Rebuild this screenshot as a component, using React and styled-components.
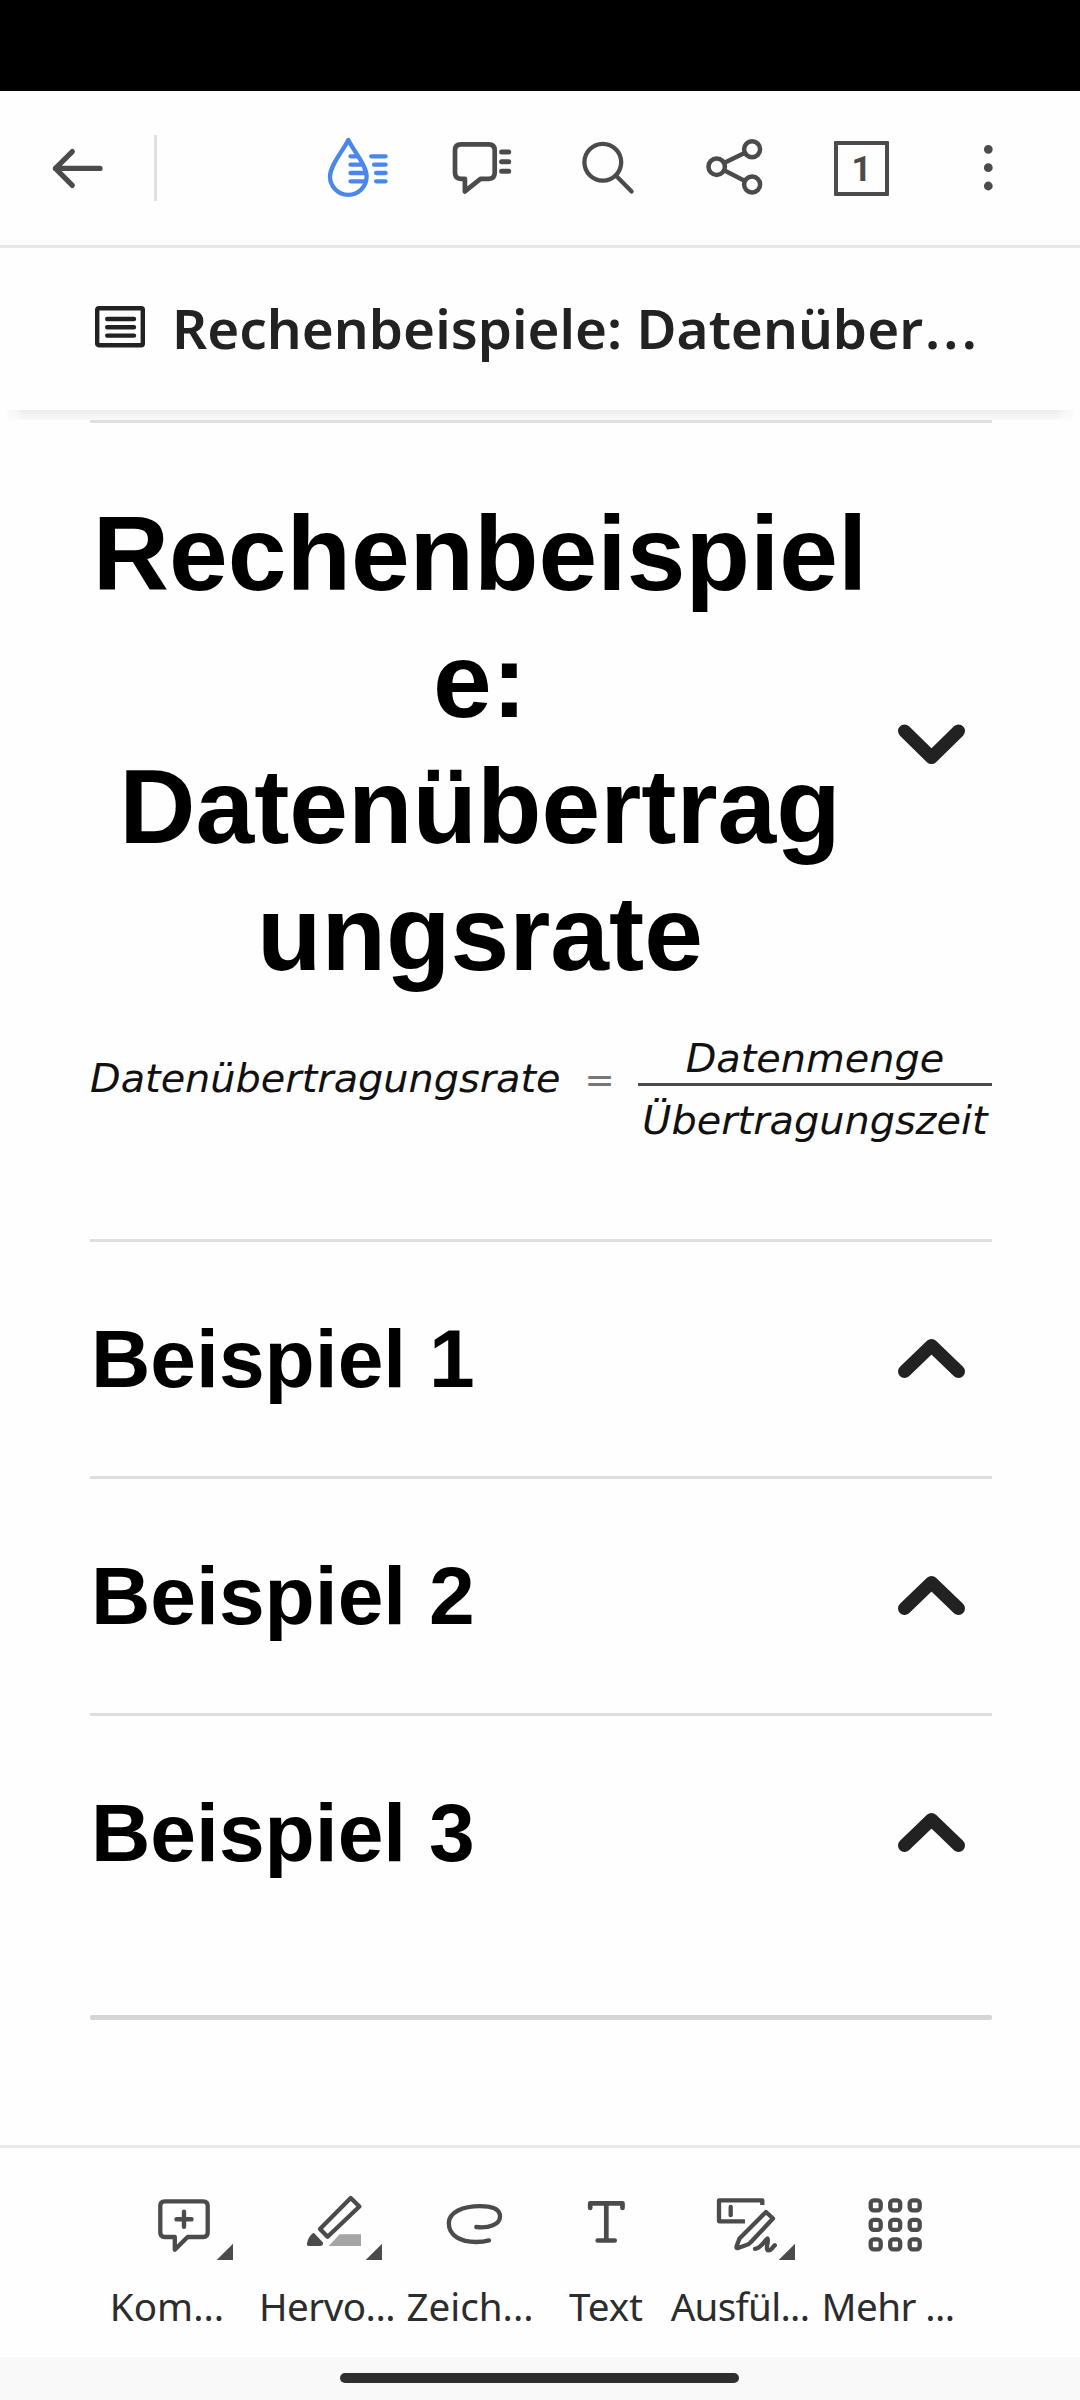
import React from "react";
import styled, { createGlobalStyle } from "styled-components";

const Ink = "#4b4b4b";
const Blue = "#4b87eb";

const GlobalStyle = createGlobalStyle`
  * { box-sizing: border-box; }
  body { margin: 0; background: #fefefe; }
`;

const Screen = styled.div`
  display: flex;
  flex-direction: column;
  width: 1080px;
  height: 2400px;
  overflow: hidden;
  background: #fefefe;
  font-family: "Noto Sans", sans-serif;
`;

const StatusBar = styled.div`
  height: 91px;
  flex: none;
  background: #000;
`;

const TopBar = styled.header`
  display: flex;
  align-items: center;
  flex: none;
  height: 157px;
  padding: 0 29px 0 37px;
  border-bottom: 3px solid #e7e7e7;
`;

const Divider = styled.div`
  width: 3px;
  height: 66px;
  margin-left: 37px;
  background: #e0e0e0;
`;

const Actions = styled.div`
  display: flex;
  gap: 46.5px;
  margin-left: auto;
  margin-right: 23px;
`;

const Action = styled.div`
  display: flex;
  align-items: center;
  justify-content: center;
  width: 80px;
  height: 80px;
`;

const Icon = styled.svg`
  display: block;
  flex: none;
  fill: none;
  stroke: ${(p) => p.$color || Ink};
  stroke-width: ${(p) => p.$weight || 4.3};
  stroke-linecap: round;
  stroke-linejoin: round;
`;

const PageBadge = styled.div`
  width: 55px;
  height: 55px;
  border: 4px solid ${Ink};
  border-radius: 1px;
  color: ${Ink};
  font-family: Roboto, sans-serif;
  font-size: 35px;
  font-weight: 700;
  line-height: 49px;
  text-align: center;
`;

const OutlineBar = styled.div`
  display: flex;
  flex: none;
  height: 162px;
  padding: 58px 90px 0 95px;
`;

const OutlineTitle = styled.div`
  margin: -16px 0 0 27px;
  color: #222;
  font-size: 54.8px;
  font-weight: 600;
  line-height: 76px;
  white-space: nowrap;
`;

const Ellipsis = styled.span`
  margin-left: 2px;
  letter-spacing: 3.2px;
`;

const Shadow = styled.div`
  flex: none;
  height: 10px;
  margin: 0 4px;
  background: linear-gradient(#ededed, #f9f9f9);
  mask-image: linear-gradient(90deg, transparent, #000 20px, #000 1052px, transparent);
`;

const Document = styled.main`
  flex: 1;
  padding: 0 88px 0 90px;
  font-family: "Liberation Sans", sans-serif;
`;

const Section = styled.section`
  height: ${(p) => p.$height}px;
  border-top: 3px solid #dfdfdf;
`;

const SectionHeader = styled.div`
  display: flex;
  align-items: center;
  justify-content: space-between;
  padding-right: 27px;
`;

const MainHeader = styled(SectionHeader)`
  padding-top: 67px;
`;

const MainTitle = styled.h1`
  width: 780px;
  margin: 0;
  color: #000;
  font-size: 105.6px;
  line-height: 126.72px;
  text-align: center;
  word-wrap: break-word;
`;

const SubTitle = styled.h2`
  margin: 0 0 0 1px;
  color: #000;
  font-size: 82.2px;
  line-height: 234px;
`;

const Formula = styled.div`
  display: flex;
  margin-top: 35px;
  color: #111;
  font-family: "DejaVu Sans", sans-serif;
  font-size: 39.8px;
  font-style: italic;
  line-height: 46px;
  white-space: nowrap;
`;

const Term = styled.span`
  margin-top: 23px;
`;

const Equals = styled.span`
  margin: 25px 0 0 24px;
  color: #777;
  font-size: 36px;
  font-style: normal;
`;

const Fraction = styled.div`
  width: 354px;
  margin-left: auto;
  text-align: center;
`;

const Numerator = styled.div`
  height: 54px;
  padding-top: 3px;
  border-bottom: 3px solid #4a4a4a;
`;

const Denominator = styled.div`
  padding-top: 11px;
`;

const EndRule = styled.div`
  height: 5px;
  margin-top: 65px;
  border-radius: 2px;
  background: #d5d5d5;
`;

const Tools = styled.nav`
  display: grid;
  grid-template-columns: 148px 172px 114px 158px 110px 186px;
  flex: none;
  height: 212px;
  padding: 42px 0 0 93px;
  border-top: 3px solid #e9e9e9;
`;

const Tool = styled.div`
  display: flex;
  flex-direction: column;
  align-items: center;
`;

const ToolLabel = styled.span`
  margin-top: 13px;
  color: #2c2c2c;
  font-size: 38.6px;
  line-height: 54px;
  letter-spacing: ${(p) => p.$spacing || 0}px;
  white-space: nowrap;
`;

const GestureBar = styled.div`
  flex: none;
  height: 43px;
  padding: 16px 0 0 340px;
  background: #f9f9f9;
`;

const Pill = styled.div`
  width: 399px;
  height: 10px;
  border-radius: 5px;
  background: #2f2f2f;
`;

function Chevron({ down }) {
  return (
    <Icon width="67" height="46" viewBox="0 0 67 46" $color="#222" $weight={13}>
      <path d={down ? "M6.5 11L33.5 37.5L60.5 11" : "M6.5 35.5L33.5 9.5L60.5 35.5"} />
    </Icon>
  );
}

// Corner mark of tools that open a sub menu
function Corner({ x }) {
  return <path d={`M${x} 53.7V70H${x - 16.3}Z`} fill={Ink} stroke="none" />;
}

const tools = [
  {
    label: "Kom...",
    drawing: (
      <>
        <path d="M64.8 11.3H103.2Q107.7 11.3 107.7 15.8V42.5Q107.7 47 103.2 47H87.6L74.8 59.8V47H64.8Q60.3 47 60.3 42.5V15.8Q60.3 11.3 64.8 11.3Z" />
        <path d="M76.5 29.3H91.5M84 21.8V36.8" strokeWidth="4.4" />
        <Corner x={133} />
      </>
    ),
  },
  {
    label: "Hervo...",
    spacing: -0.5,
    drawing: (
      <>
        <path d="M90.7 8L99.4 16.5L67.6 46.7L60 38.9Z" />
        <path d="M54 43L63 52.4Q63.4 55.9 60 55.9H49Q46 55.9 47.2 52.4Q48.5 47 51.5 44.5Q52.8 42.5 54 43Z" fill={Ink} stroke="none" />
        <path d="M68.7 56L79.7 44.3H101V56Z" fill="#a5a5a5" stroke="none" />
        <Corner x={122} />
      </>
    ),
  },
  {
    label: "Zeich...",
    drawing: (
      <path d="M73.3 37C86 38.5 97 34.5 97 26.5C97 19 88 16.2 77 16.2C60 16.2 45.8 22 45.8 33.3C45.8 46 58 52 73 52C78 52 82.5 51.4 86 50.4" />
    ),
  },
  {
    label: "Text",
    drawing: <path d="M51.2 18V13.4H83.5V18M67.3 13.4V50.5M58.7 50.5H75.7" strokeWidth="4.7" />,
  },
  {
    label: "Ausfül...",
    spacing: -0.7,
    drawing: (
      <>
        <path d="M89.3 15V10.4H46V31.3H72" strokeLinecap="butt" />
        <path d="M57.7 17V25.2" />
        <path d="M93 22L100 28.5L77.5 52.5Q76 54.5 72 55.5L64.3 58.2Q63.3 58.2 63.5 56.5L66.5 48.5Z" />
        <path d="M82 58.8C88 58.5 91 51 94.5 48.5C96.5 50 91.5 60 95.5 60.3C98.5 60.5 99.5 57 101.8 55.3" />
        <Corner x={122} />
      </>
    ),
  },
  {
    label: "Mehr ...",
    spacing: -0.6,
    drawing: [15.3, 34.8, 54.3].map((y) =>
      [54.7, 74.2, 93.7].map((x) => (
        <rect key={`${x}-${y}`} x={x - 5} y={y - 5} width="10" height="10" rx="3" />
      ))
    ),
  },
];


export default function App() {
  return (
    <Screen>
      <GlobalStyle />
      <StatusBar />

      <TopBar>
        <Icon width="80" height="80" viewBox="0 0 80 80" $weight={5.2}>
          <path d="M63 40.4H18.4M35.3 23.6L18.4 40.4L35.3 57.4" />
        </Icon>
        <Divider />
        <Actions>
          <Action>
            <Icon width="80" height="80" viewBox="0 0 80 80" $color={Blue}>
              <path d="M32.3 12C27 23 14 37 14 48.5A18.3 18.3 0 0 0 50.6 48.5C50.6 37 37.6 23 32.3 12Z" />
              <path d="M34.5 28.3H41M34.5 36.7H46M34.5 45H49M34.5 53.3H49M55.3 28.3H69.6M58.1 36.7H69.6M60.1 45H69.6M60.1 53.3H69.6" />
            </Icon>
          </Action>
          <Action>
            <Icon width="80" height="80" viewBox="0 0 80 80" $weight={4.7}>
              <path d="M19 16.3H46.7Q52.7 16.3 52.7 22.3V44.8Q52.7 50.8 46.7 50.8H38.5L22.9 63.4V50.8H19Q13 50.8 13 44.8V22.3Q13 16.3 19 16.3Z" />
              <path d="M59.6 24H66.7M59.6 33.7H66.7M59.6 43.3H66.7" strokeWidth="5" />
            </Icon>
          </Action>
          <Action>
            <Icon width="80" height="80" viewBox="0 0 80 80">
              <circle cx="33.8" cy="34.3" r="18.4" />
              <path d="M47.8 48.5L62.6 63.4" />
            </Icon>
          </Action>
          <Action>
            <Icon width="80" height="80" viewBox="0 0 80 80" $weight={4.5}>
              <circle cx="21.7" cy="38.7" r="8.2" />
              <circle cx="57.1" cy="21.3" r="8" />
              <circle cx="57.1" cy="56.5" r="8" />
              <path d="M30 34.6L49 25.2M30 42.8L49 52.4" />
            </Icon>
          </Action>
          <Action>
            <PageBadge>1</PageBadge>
          </Action>
          <Action>
            <Icon width="80" height="80" viewBox="0 0 80 80" $weight={8.8}>
              <path d="M40.3 21.3h0M40.3 39.7h0M40.3 58h0" />
            </Icon>
          </Action>
        </Actions>
      </TopBar>

      <OutlineBar>
        <Icon width="50" height="42" viewBox="0 0 50 42" $color="#222" $weight={4.4}>
          <rect x="2.2" y="2.2" width="45.6" height="37" rx="1.5" />
          <path d="M12.2 13H39M12.2 21.3H39M12.2 29.6H39" />
        </Icon>
        <OutlineTitle>
          Rechenbeispiele: Datenüber<Ellipsis>...</Ellipsis>
        </OutlineTitle>
      </OutlineBar>
      <Shadow />

      <Document>
        <Section $height={819}>
          <MainHeader>
            <MainTitle>Rechenbeispiele: Datenübertragungsrate</MainTitle>
            <Chevron down />
          </MainHeader>
          <Formula>
            <Term>Datenübertragungsrate</Term>
            <Equals>=</Equals>
            <Fraction>
              <Numerator>Datenmenge</Numerator>
              <Denominator>Übertragungszeit</Denominator>
            </Fraction>
          </Formula>
        </Section>
        {["Beispiel 1", "Beispiel 2", "Beispiel 3"].map((title) => (
          <Section key={title} $height={237}>
            <SectionHeader>
              <SubTitle>{title}</SubTitle>
              <Chevron />
            </SectionHeader>
          </Section>
        ))}
        <EndRule />
      </Document>

      <Tools>
        {tools.map((tool) => (
          <Tool key={tool.label}>
            <Icon width="134" height="76" viewBox="0 0 134 76">{tool.drawing}</Icon>
            <ToolLabel $spacing={tool.spacing}>{tool.label}</ToolLabel>
          </Tool>
        ))}
      </Tools>
      <GestureBar>
        <Pill />
      </GestureBar>
    </Screen>
  );
}
